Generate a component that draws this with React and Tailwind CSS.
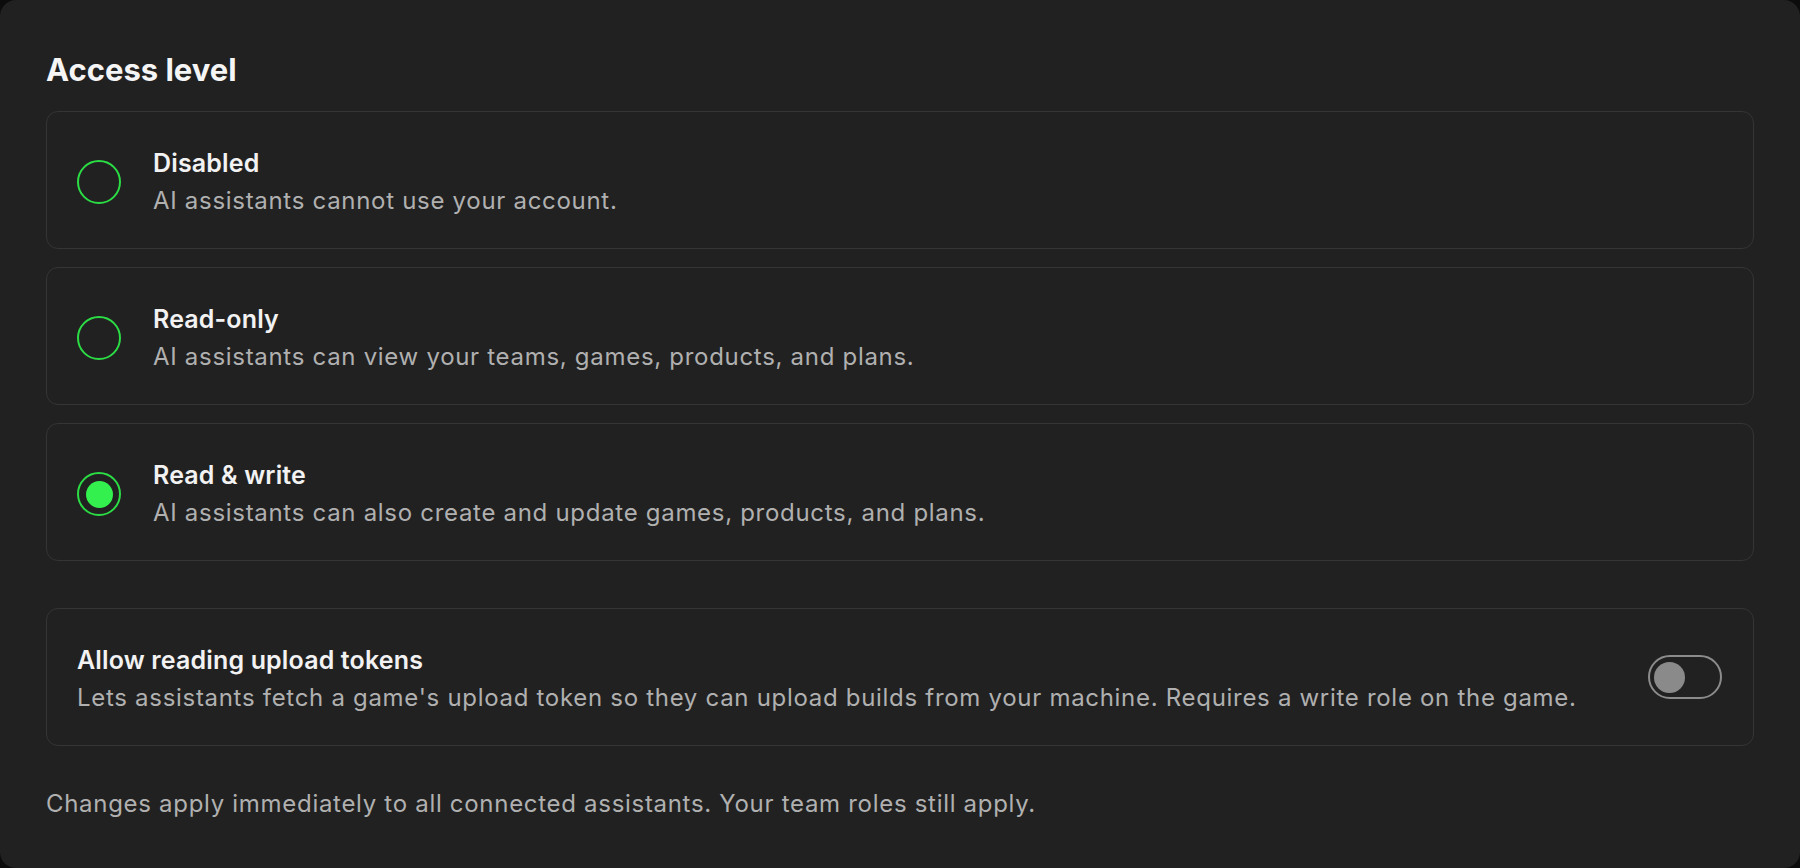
import React from "react";

const options = [
  { title: "Disabled", desc: "AI assistants cannot use your account.", selected: false },
  { title: "Read-only", desc: "AI assistants can view your teams, games, products, and plans.", selected: false },
  { title: "Read & write", desc: "AI assistants can also create and update games, products, and plans.", selected: true },
];

function Radio({ selected }) {
  return (
    <div className="w-[44px] h-[44px] shrink-0 rounded-full border-2 border-[#2bdc45] flex items-center justify-center">
      {selected && <div className="w-[27px] h-[27px] rounded-full bg-[#33f04f]" />}
    </div>
  );
}

export default function App() {
  return (
    <div className="w-[1800px] h-[868px] bg-[#0c0c0c]" style={{ fontFamily: "Inter, 'Noto Sans', sans-serif" }}>
      <div className="w-full h-full rounded-[16px] bg-[#212121] px-[46px] pt-[50px] flex flex-col">
        <h1 className="text-[31px] leading-[40px] font-bold text-[#f5f5f5]">Access level</h1>
        <div className="mt-[21px] flex flex-col gap-[18px]">
          {options.map((o) => (
            <div key={o.title} className="h-[138px] rounded-[12px] border border-[#353535] px-[30px] pt-[4px] flex items-center gap-[32px]">
              <Radio selected={o.selected} />
              <div className="flex flex-col">
                <div className="text-[25px] leading-[36px] font-semibold text-[#f2f2f2] tracking-[0.15px]">{o.title}</div>
                <div className="text-[24px] leading-[39px] text-[#b0b0b0] tracking-[0.7px]">{o.desc}</div>
              </div>
            </div>
          ))}
        </div>
        <div className="mt-[47px] h-[138px] rounded-[12px] border border-[#353535] pl-[30px] pr-[31px] pt-[4px] flex items-center justify-between">
          <div className="flex flex-col">
            <div className="text-[25px] leading-[36px] font-semibold text-[#f2f2f2] tracking-[0.15px]">Allow reading upload tokens</div>
            <div className="text-[24px] leading-[39px] text-[#b0b0b0] tracking-[0.7px]">
              Lets assistants fetch a game's upload token so they can upload builds from your machine. Requires a write role on the game.
            </div>
          </div>
          <div className="w-[74px] h-[44px] -mt-[4px] rounded-full border-2 border-[#8c8c8c] flex items-center pl-[4px] shrink-0">
            <div className="w-[31px] h-[31px] rounded-full bg-[#8a8a8a]" />
          </div>
        </div>
        <p className="mt-[40px] text-[24px] leading-[36px] text-[#b0b0b0] tracking-[0.7px]">
          Changes apply immediately to all connected assistants. Your team roles still apply.
        </p>
      </div>
    </div>
  );
}
